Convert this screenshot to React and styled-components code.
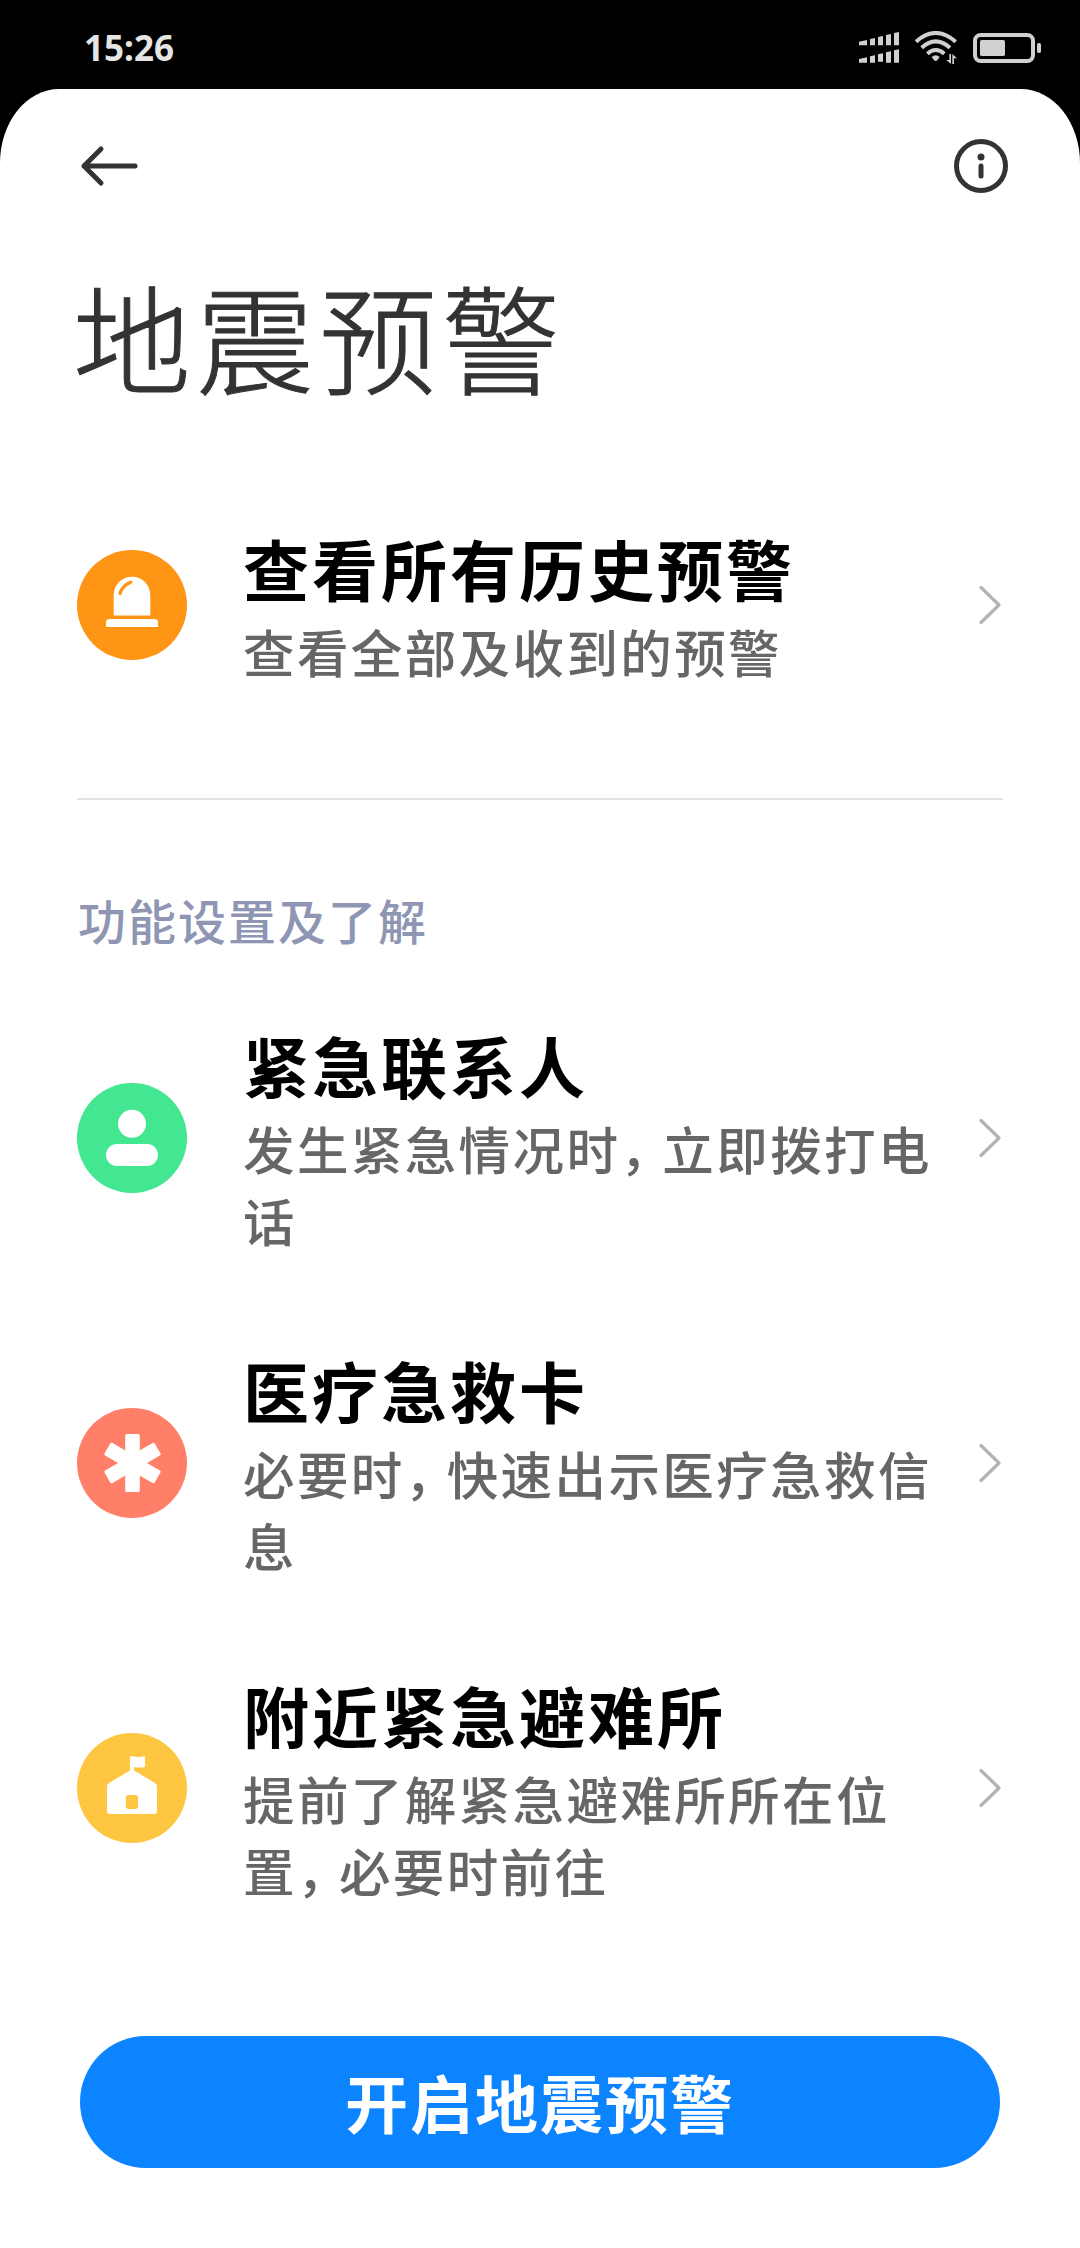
import React from 'react';
import styled, { createGlobalStyle } from 'styled-components';

const GlobalStyle = createGlobalStyle`
  * {
    box-sizing: border-box;
  }

  body {
    margin: 0;
    background-color: #000;
    font-family: 'Noto Sans CJK SC', sans-serif;
  }
`;

const Screen = styled.div`
  display: flex;
  flex-direction: column;
  width: 1080px;
  height: 2248px;
  background-color: #000;
`;

const StatusBar = styled.div`
  display: flex;
  align-items: center;
  justify-content: space-between;
  height: 89px;
  padding: 6px 39px 0 84px;
`;

const Clock = styled.span`
  font-family: 'Noto Sans', sans-serif;
  font-size: 35px;
  font-weight: 700;
  line-height: 40px;
  color: #e5e5e5;
`;

const StatusIcons = styled.div`
  display: flex;
  align-items: center;
  gap: 16px;
  color: #d0d0d0;

  svg {
    display: block;
  }
`;

const Sheet = styled.main`
  display: flex;
  flex-direction: column;
  flex: 1;
  padding: 0 77px;
  background-color: #fff;
  border-radius: 59px 59px 0 0 / 74px 74px 0 0;
`;

const TopBar = styled.header`
  display: flex;
  align-items: center;
  justify-content: space-between;
  height: 154px;
  margin-right: -5px;
`;

const IconButton = styled.button`
  display: flex;
  padding: 0;
  border: none;
  background: none;
  color: #333;
`;

const PageTitle = styled.h1`
  height: 180px;
  margin: 0;
  font-size: 118px;
  font-weight: 300;
  line-height: 183px;
  letter-spacing: 5px;
  text-indent: -4px;
  color: #333;
  -webkit-text-stroke: 1px #333;
`;

const List = styled.div`
  display: flex;
  flex-direction: column;
`;

const Row = styled.div`
  display: flex;
  align-items: center;
  height: ${({ $height }) => $height}px;
`;

const Badge = styled.div`
  flex: none;
  width: 110px;
  height: 110px;
  border-radius: 50%;
  background-color: ${({ $color }) => $color};

  svg {
    display: block;
  }
`;

const RowText = styled.div`
  flex: none;
  width: 700px;
  margin: 0 36px 0 56px;
  padding-bottom: 2px;
`;

const RowTitle = styled.h2`
  margin: 0;
  padding-bottom: 2px;
  font-size: 66px;
  font-weight: 700;
  line-height: 92px;
  letter-spacing: 3px;
  color: #000;
`;

const RowSummary = styled.p`
  margin: 0;
  font-size: 51.5px;
  font-weight: 500;
  line-height: 71.5px;
  letter-spacing: 2.4px;
  color: #666;
`;

const Comma = styled.span`
  letter-spacing: -9.5px;
`;

const Divider = styled.hr`
  width: 926px;
  height: 2px;
  margin: 11px 0 0;
  border: none;
  background-color: #e3e3e3;
`;

const SectionTitle = styled.h3`
  margin: 0;
  padding: 74px 0 0 1px;
  height: 175px;
  font-size: 48px;
  font-weight: 500;
  line-height: 90px;
  letter-spacing: 2px;
  color: #8f96b4;
`;

const PrimaryButton = styled.button`
  width: 920px;
  height: 132px;
  margin: auto 3px 80px;
  padding: 0 0 2px;
  border: none;
  border-radius: 66px;
  background-color: #0d84ff;
  font-family: inherit;
  font-size: 63px;
  font-weight: 700;
  line-height: 128px;
  letter-spacing: 2px;
  color: #fff;
`;

const SignalIcon = () => (
  <svg width="40" height="31" viewBox="117 97 120 93" fill="currentColor">
    <path d="M117 126l24-5v16h-24zM150 118l15-3v22h-15zM174 112l15-3v28h-15zM198 106l15-3v34h-15zM222 100l15-3v40h-15z" />
    <path d="M117 178l24-5v16h-24zM150 170l15-3v22h-15zM174 164l15-3v25h-15zM198 158l15-3v34h-15zM222 152l15-3v40h-15z" />
  </svg>
);

const WifiIcon = () => (
  <svg width="42" height="33" viewBox="286 96 126 99" fill="none" stroke="currentColor" strokeWidth="12">
    <path d="M289 128Q348 76 408 128" />
    <path d="M306 146Q348 108 391 146" />
    <path d="M323 164Q348 142 374 164" />
    <path d="M336 174q12-10 24 0l-7 10q-5 4-10 0z" fill="currentColor" stroke="none" />
    <path d="M389 165h5v30l-14-12h9zM398 195v-30l14 13h-9v17z" fill="currentColor" stroke="none" />
  </svg>
);

const BatteryIcon = () => (
  <svg width="68" height="30" viewBox="459 96 204 90" fill="currentColor">
    <rect x="465" y="102" width="174" height="78" rx="17" fill="none" stroke="currentColor" strokeWidth="12" />
    <rect x="480" y="117" width="75" height="48" rx="5" />
    <rect x="651" y="126" width="12" height="30" rx="5" />
  </svg>
);

const BackIcon = () => (
  <svg width="64" height="48" viewBox="0 0 64 48" fill="none" stroke="currentColor" strokeWidth="5" strokeLinecap="round" strokeLinejoin="round">
    <path d="M58 24H7M24 7L7 24l17 17" />
  </svg>
);

const InfoIcon = () => (
  <svg width="54" height="54" viewBox="0 0 54 54">
    <circle cx="27" cy="27" r="24.5" fill="none" stroke="currentColor" strokeWidth="5" />
    <circle cx="27" cy="18" r="3.5" fill="currentColor" />
    <rect x="24.5" y="24.5" width="5" height="15" rx="2.5" fill="currentColor" />
  </svg>
);

const ChevronIcon = () => (
  <svg width="24" height="42" viewBox="0 0 24 42" fill="none" stroke="#b3b3b3" strokeWidth="3.2" strokeLinecap="round" strokeLinejoin="round">
    <path d="M2 3.5L20 21 2 38.5" />
  </svg>
);

const AlarmIcon = () => (
  <svg width="110" height="110" viewBox="0 0 110 110" fill="#fff">
    <path d="M36.7 65.5V45a18.3 18.3 0 0 1 36.6 0v20.5z" />
    <path d="M29 77v-4.5q0-3.5 3.5-3.5h45q3.5 0 3.5 3.5V77z" />
    <path d="M43 43.5q2.5-8 10.7-11.2" fill="none" stroke="#ff9514" strokeWidth="3.3" strokeLinecap="round" />
  </svg>
);

const ContactIcon = () => (
  <svg width="110" height="110" viewBox="0 0 110 110" fill="#fff">
    <circle cx="55" cy="40.8" r="14" />
    <rect x="29" y="61" width="52" height="22" rx="11" />
  </svg>
);

const MedicalIcon = () => (
  <svg width="110" height="110" viewBox="0 0 110 110" fill="#fff">
    {[0, 60, 120].map((angle) => (
      <rect key={angle} x="48.2" y="26" width="14.6" height="58" rx="1.6" transform={`rotate(${angle} 55.5 55)`} />
    ))}
  </svg>
);

const ShelterIcon = () => (
  <svg width="110" height="110" viewBox="0 0 110 110" fill="#fff">
    <path d="M53 38V23.3h2.5q6 1.5 12.5 0V34q-6 1-11.3 0v4z" />
    <path
      fillRule="evenodd"
      d="M55 36.3L78 50q2 1.2 2 3.5V78q0 3-3 3H33q-3 0-3-3V53.5q0-2.300 2-3.500zM51.5 62q-2.700 0-2.700 2.700v8.600q0 2.700 2.700 2.700h6.800q2.700 0 2.700-2.700v-8.600q0-2.700-2.700-2.700z"
    />
  </svg>
);

const features = [
  {
    title: '紧急联系人',
    summary: ['发生紧急情况时', '立即拨打电话'],
    color: '#44e791',
    icon: <ContactIcon />,
  },
  {
    title: '医疗急救卡',
    summary: ['必要时', '快速出示医疗急救信息'],
    color: '#ff7f69',
    icon: <MedicalIcon />,
  },
  {
    title: '附近紧急避难所',
    summary: ['提前了解紧急避难所所在位置', '必要时前往'],
    color: '#ffc741',
    icon: <ShelterIcon />,
  },
];

const ListRow = ({ title, summary, color, icon, height }) => {
  return (
    <Row $height={height}>
      <Badge $color={color}>{icon}</Badge>
      <RowText>
        <RowTitle>{title}</RowTitle>
        <RowSummary>
          {summary.map((part, index) => (
            <React.Fragment key={part}>
              {index > 0 && <Comma>{'\uff0c'}</Comma>}
              {part}
            </React.Fragment>
          ))}
        </RowSummary>
      </RowText>
      <ChevronIcon />
    </Row>
  );
};

const App = () => {
  return (
    <>
      <GlobalStyle />
      <Screen>
        <StatusBar>
          <Clock>15:26</Clock>
          <StatusIcons>
            <SignalIcon />
            <WifiIcon />
            <BatteryIcon />
          </StatusIcons>
        </StatusBar>
        <Sheet>
          <TopBar>
            <IconButton aria-label="返回">
              <BackIcon />
            </IconButton>
            <IconButton aria-label="信息">
              <InfoIcon />
            </IconButton>
          </TopBar>
          <PageTitle>地震预警</PageTitle>
          <List>
            <ListRow
              title="查看所有历史预警"
              summary={['查看全部及收到的预警']}
              color="#ff9514"
              icon={<AlarmIcon />}
              height={364}
            />
          </List>
          <Divider />
          <SectionTitle>功能设置及了解</SectionTitle>
          <List>
            {features.map((feature) => (
              <ListRow key={feature.title} {...feature} height={325} />
            ))}
          </List>
          <PrimaryButton>开启地震预警</PrimaryButton>
        </Sheet>
      </Screen>
    </>
  );
};

export default App;
